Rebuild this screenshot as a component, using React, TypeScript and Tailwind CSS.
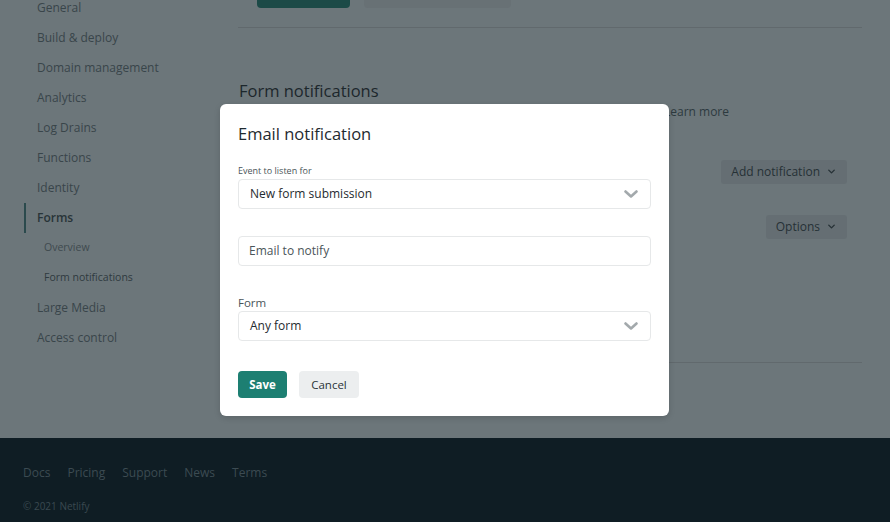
import { ChevronDown } from "lucide-react";

const navItems = [
  "General",
  "Build & deploy",
  "Domain management",
  "Analytics",
  "Log Drains",
  "Functions",
  "Identity",
];

function Select({ value }: { value: string }) {
  return (
    <div className="flex h-[30px] items-center justify-between rounded-[4px] border border-[#e6e8e9] bg-white pl-[11px] pr-[12px]">
      <span className="text-[12px] text-[#1f2b30]">{value}</span>
      <svg width="14" height="9" viewBox="0 0 14 9" className="text-[#a3a9ac]">
        <path d="M1.5 1.5 L7 6.5 L12.5 1.5" fill="none" stroke="currentColor" strokeWidth="2.6" strokeLinecap="round" strokeLinejoin="round" />
      </svg>
    </div>
  );
}

export default function App() {
  return (
    <div
      className="relative flex h-[522px] w-[890px] flex-col overflow-hidden"
      style={{ fontFamily: '"Open Sans", "Noto Sans", sans-serif' }}
    >
      {/* page under the modal */}
      <div className="relative flex h-[438px] bg-[#6c767a]">
        <aside className="w-[220px] shrink-0 -mt-[7px]">
          <ul className="flex flex-col text-[12px] text-[#39454a]">
            {navItems.map((n) => (
              <li key={n} className="flex h-[30px] items-center pl-[37px]">
                {n}
              </li>
            ))}
            <li className="ml-[24px] flex h-[30px] items-center border-l-2 border-[#2b4a4d] pl-[11px] font-semibold text-[#283438]">
              Forms
            </li>
            <li className="flex h-[30px] items-center pl-[44px] text-[10.5px] text-[#3f4a4f]">Overview</li>
            <li className="flex h-[30px] items-center pl-[44px] text-[10.5px] text-[#2f3a3f]">Form notifications</li>
            <li className="flex h-[30px] items-center pl-[37px]">Large Media</li>
            <li className="flex h-[30px] items-center pl-[37px]">Access control</li>
          </ul>
        </aside>

        <main className="flex-1 pr-[28px]">
          <div className="flex gap-[14px] pl-[37px] -mt-[20px]">
            <div className="h-[28px] w-[93px] rounded-[4px] bg-[#1c4a47]" />
            <div className="h-[28px] w-[147px] rounded-[4px] bg-[#687175]" />
          </div>
          <div className="ml-[18px] mt-[19px] border-t border-[#61696d]" />
          <div className="ml-[19px] mt-[51px] text-[16.5px] text-[#1c272c]">Form notifications</div>
          <div className="ml-[19px] -mt-[1px] flex justify-end pr-[133px] text-[12px] text-[#2c3a3f]">Learn more</div>
          <div className="mt-[39px] flex justify-end pr-[15px]">
            <div className="flex h-[24px] items-center gap-[6px] rounded-[3px] bg-[#656e73] px-[10px] text-[12px] text-[#263136]">
              Add notification <ChevronDown size={11} strokeWidth={3} />
            </div>
          </div>
          <div className="mt-[31px] flex justify-end pr-[15px]">
            <div className="flex h-[24px] items-center gap-[6px] rounded-[3px] bg-[#656e73] px-[10px] text-[12px] text-[#263136]">
              Options <ChevronDown size={11} strokeWidth={3} />
            </div>
          </div>
          <div className="mt-[123px] border-t border-[#61696d]" />
        </main>

        {/* modal */}
        <div className="absolute left-[220px] top-[104px] w-[449px] rounded-[6px] bg-white px-[18px] pb-[18px] pt-[19px] shadow-[0_2px_6px_rgba(0,0,0,0.15)]">
          <h2 className="text-[16.5px] leading-[22px] text-[#1f2a2f]">Email notification</h2>
          <div className="mt-[20px] text-[9px] leading-[12px] text-[#4a5559]">Event to listen for</div>
          <div className="mt-[2px]">
            <Select value="New form submission" />
          </div>
          <div className="mt-[27px] flex h-[30px] items-center rounded-[4px] border border-[#e6e8e9] pl-[10px] text-[12px] text-[#4a5459]">
            Email to notify
          </div>
          <div className="mt-[30px] text-[11.5px] leading-[14px] text-[#4a5559]">Form</div>
          <div className="mt-[1px]">
            <Select value="Any form" />
          </div>
          <div className="mt-[30px] flex gap-[12px]">
            <button className="h-[27px] w-[49px] rounded-[4px] bg-[#1d7f72] text-[11.5px] font-bold text-white">Save</button>
            <button className="h-[27px] w-[60px] rounded-[4px] bg-[#eceeef] text-[11.5px] text-[#2a3439]">Cancel</button>
          </div>
        </div>
      </div>

      <footer className="flex-1 bg-[#0f1d24] pl-[23px] pt-[26px]">
        <div className="flex gap-[17px] text-[12px] text-[#3c4b52]">
          <span>Docs</span>
          <span>Pricing</span>
          <span>Support</span>
          <span>News</span>
          <span>Terms</span>
        </div>
        <div className="mt-[17px] text-[10px] text-[#3a4950]">© 2021 Netlify</div>
      </footer>
    </div>
  );
}
